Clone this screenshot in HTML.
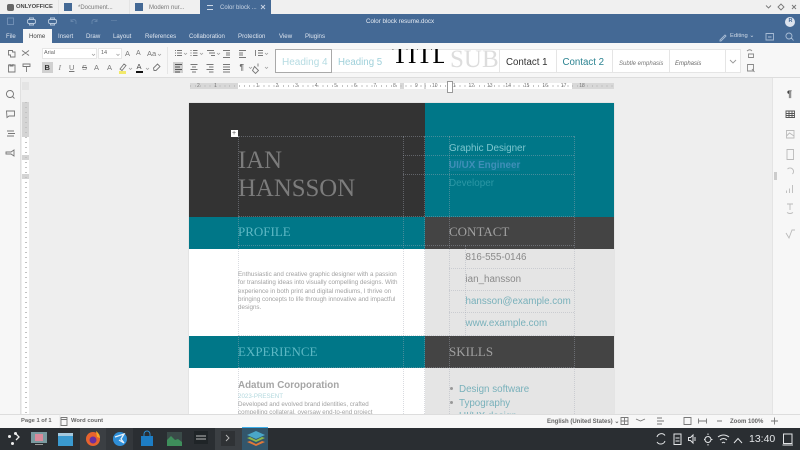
<!DOCTYPE html>
<html><head><meta charset="utf-8">
<style>
html,body{margin:0;padding:0;width:800px;height:450px;overflow:hidden;background:#eee;font-family:"Liberation Sans",sans-serif}
.a,.t{position:absolute}
.t{white-space:nowrap;line-height:1}
.s{font-family:"Liberation Serif",serif}
svg{position:absolute;overflow:visible}
svg *{fill:none;stroke:#777;stroke-width:.9}
.ic{left:0;top:0}
.dl{position:absolute;border-left:1px dotted rgba(165,170,180,.42);width:0}
.dh{position:absolute;border-top:1px dotted rgba(165,170,180,.42);height:0}
</style></head><body>
<!-- tab bar -->
<div class="a" style="left:0;top:0;width:800px;height:14px;background:#f0f0f0"></div>
<div class="a" style="left:58px;top:0;width:1px;height:14px;background:#e4e4e4"></div>
<div class="a" style="left:129px;top:0;width:1px;height:14px;background:#e4e4e4"></div>
<div class="a" style="left:200px;top:0;width:71px;height:14px;background:#446995"></div>
<div class="a" style="left:7px;top:4px;width:7px;height:7px;background:#666;border-radius:2px"></div>
<div class="t" style="left:16px;top:4.500px;font-size:5.800px;font-weight:bold;color:#444">ONLYOFFICE</div>
<div class="a" style="left:64px;top:3px;width:8px;height:8px;background:#446995"></div>
<div class="t" style="left:78px;top:4.500px;font-size:6px;color:#777">*Document...</div>
<div class="a" style="left:135px;top:3px;width:8px;height:8px;background:#446995"></div>
<div class="t" style="left:149px;top:4.500px;font-size:6px;color:#777">Modern nur...</div>
<div class="a" style="left:207px;top:5px;width:6px;height:3px;border-top:1px solid #cdd8e6;border-bottom:1px solid #cdd8e6"></div>
<div class="t" style="left:220px;top:4.500px;font-size:6px;color:#c8d4e4">Color block ...</div>
<svg class="ic" width="800" height="14"><path d="M261 5l4 4M265 5l-4 4" style="stroke:#c8d4e4"/><path d="M766 5.500l2.500 2.500 2.500-2.500M778 7l3-3 3 3-3 3zM792 5l4 4M796 5l-4 4"/></svg>
<!-- header -->
<div class="a" style="left:0;top:14px;width:800px;height:29px;background:#446995"></div>
<div class="t" style="left:366px;top:19px;font-size:6.200px;color:#e4eaf2">Color block resume.docx</div>
<div class="a" style="left:785px;top:17px;width:10px;height:10px;border-radius:50%;background:#dce3ee"></div>
<div class="t" style="left:788.500px;top:19px;font-size:5.500px;font-weight:bold;color:#446995">R</div>
<svg class="ic" width="800" height="43">
<rect x="7.500" y="18" width="6" height="6.500" style="stroke:#7593b7"/>
<rect x="27.500" y="19.500" width="8" height="4" rx="1.500" style="stroke:#b8c9dd"/><path d="M29.500 19.500v-1.500h4v1.500M29.500 23.500v1.500h4v-1.500" style="stroke:#b8c9dd"/>
<rect x="48.500" y="19.500" width="8" height="4" rx="1.500" style="stroke:#b8c9dd"/><path d="M50.500 19.500v-1.500h4v1.500M50.500 23.500v1.500h4v-1.500" style="stroke:#b8c9dd"/>
<path d="M71 21q3-3 5 0v3M71 19v2.500h2.500M97 21q-3-3-5 0v3M97 19v2.500h-2.500" style="stroke:#6585ab"/>
</svg>
<div class="t" style="left:111px;top:18px;font-size:6px;color:#b8c9dd">···</div>
<div class="t" style="left:6px;top:33.500px;font-size:6.100px;color:#dfe6f0">File</div>
<div class="a" style="left:23px;top:29px;width:29px;height:14px;background:#f7f7f7"></div>
<div class="t" style="left:29px;top:33.500px;font-size:6.100px;color:#444">Home</div>
<div class="t" style="left:58px;top:33.500px;font-size:6.100px;color:#dfe6f0">Insert</div>
<div class="t" style="left:86px;top:33.500px;font-size:6.100px;color:#dfe6f0">Draw</div>
<div class="t" style="left:113px;top:33.500px;font-size:6.100px;color:#dfe6f0">Layout</div>
<div class="t" style="left:145px;top:33.500px;font-size:6.100px;color:#dfe6f0">References</div>
<div class="t" style="left:189px;top:33.500px;font-size:6.100px;color:#dfe6f0">Collaboration</div>
<div class="t" style="left:238px;top:33.500px;font-size:6.100px;color:#dfe6f0">Protection</div>
<div class="t" style="left:279px;top:33.500px;font-size:6.100px;color:#dfe6f0">View</div>
<div class="t" style="left:305px;top:33.500px;font-size:6.100px;color:#dfe6f0">Plugins</div>
<div class="t" style="left:730px;top:34px;font-size:5.800px;color:#cdd8e6">Editing ⌄</div>
<svg class="ic" width="800" height="43"><path d="M720 40l5-5 1 1-5 5h-1zM766 33.500h7.500v6.500h-7.500zM768 37h3.500M789 33a3 3 0 1 1-.1 0M791.500 38l2 2.500" style="stroke:#a7bbd4"/></svg>
<!-- toolbar -->
<div class="a" style="left:0;top:43px;width:800px;height:35px;background:#f7f7f7;border-bottom:1px solid #ddd;box-sizing:border-box"></div>
<div class="a" style="left:42px;top:48px;width:55px;height:11px;background:#fff;border:1px solid #e6e6e6;box-sizing:border-box"></div>
<div class="t" style="left:44px;top:51px;font-size:5.500px;color:#666">Arial</div>
<div class="a" style="left:98px;top:48px;width:24px;height:11px;background:#fff;border:1px solid #e6e6e6;box-sizing:border-box"></div>
<div class="t" style="left:101px;top:51px;font-size:5.500px;color:#666">14</div>
<div class="a" style="left:42px;top:62px;width:11px;height:11px;background:#d0d0d0"></div>
<div class="a" style="left:173px;top:62px;width:10px;height:11px;background:#d0d0d0"></div>
<div class="t" style="left:44.500px;top:64px;font-size:7.500px;font-weight:bold;color:#333">B</div>
<div class="t s" style="left:58.500px;top:64px;font-size:7.500px;font-style:italic;color:#777">I</div>
<div class="t" style="left:69px;top:64px;font-size:7.500px;text-decoration:underline;color:#777">U</div>
<div class="t" style="left:82px;top:64px;font-size:7.500px;text-decoration:line-through;color:#777">S</div>
<div class="t" style="left:94px;top:64px;font-size:7.500px;color:#777">A</div>
<div class="t" style="left:107px;top:64px;font-size:7.500px;color:#777">A</div>
<div class="t" style="left:125px;top:49.500px;font-size:7.500px;color:#777">A</div>
<div class="t" style="left:136px;top:50px;font-size:7px;color:#777">A</div>
<div class="t" style="left:147px;top:50px;font-size:7.500px;color:#777">Aa</div>
<div class="t" style="left:136.500px;top:63px;font-size:7.500px;color:#444">A</div>
<div class="a" style="left:136px;top:71px;width:7px;height:2px;background:#111"></div>
<div class="a" style="left:119px;top:71px;width:7px;height:2.500px;background:#f2e96a"></div>
<svg class="ic" width="800" height="78">
<path d="M8.500 50.500h4v1.500h2.500v5h-4.500v-2h-2zM22 50.500l7 5M22 55.500l7-5M8.500 65h6.500v7h-6.500zM10 64v2h3v-2M23 64h7v2.500h-7zM26.500 66.500v5.500M120 69l4-5 2 1.500-4 5zM153.500 68l4-4 2.500 2.500-4 4h-2z"/>
<path d="M92 54l1.500 1.500 1.500-1.500M116.500 54l1.500 1.500 1.500-1.500M158 54l1.500 1.500 1.500-1.500M129 68l1.500 1.500 1.500-1.500M146 68l1.500 1.500 1.500-1.500M184 53l1.500 1.500 1.500-1.500M200 53l1.500 1.500 1.500-1.500M217 53l1.500 1.500 1.500-1.500M265 53l1.500 1.500 1.500-1.500M249 67l1.500 1.500 1.500-1.500M265 67l1.500 1.500 1.500-1.500" style="stroke:#999;stroke-width:.7"/>
<path d="M175 50.500h1M177 50.500h5M175 53h1M177 53h5M175 55.500h1M177 55.500h5M190.500 50.500h1M193 50.500h4.500M190.500 53h1M193 53h4.500M190.500 55.500h1M193 55.500h4.500M207 50.500h7M209 53h6M211 55.500h4M223 50.500h7M226 53h4M226 55h4M223 57.500h7M239 50.500h7M239 53h4M239 55h4M239 57.500h7M258 50.500h5M258 53h5M258 55.500h5M255.500 50v6"/>
<path d="M175 64.500h7M175 67h5M175 69.500h7M175 72h5" style="stroke:#555"/>
<path d="M190.500 64.500h7M192 67h4M190.500 69.500h7M192 72h4M206.500 64.500h7M209 67h4.500M206.500 69.500h7M209 72h4.500M223 64.500h7M223 67h7M223 69.500h7M223 72h7"/>
<path d="M254.500 66.500l4 4-3 3-3-3zM258 63.500v3"/>
<path d="M167.500 47v27" style="stroke:#e4e4e4"/>
<path d="M747 51q3-2.500 5 0M748.500 54h5v3.500h-5zM747.500 64.500h6v6.500h-6zM752 69l2.500 3" style="stroke:#888"/>
</svg>
<div class="t" style="left:239.500px;top:63.500px;font-size:8px;font-weight:bold;color:#666">¶</div>
<!-- style gallery -->
<div class="a" style="left:275px;top:49px;width:466px;height:24px;background:#fff;border:1px solid #e5e5e5;box-sizing:border-box"></div>
<div class="a" style="left:275px;top:49px;width:57px;height:24px;border:1px solid #a9a9a9;box-sizing:border-box"></div>
<div class="t" style="left:282px;top:57.500px;font-size:10px;color:#b5dbe2">Heading 4</div>
<div class="t" style="left:338px;top:57.500px;font-size:9.700px;color:#9fd0da">Heading 5</div>
<div class="a" style="left:388px;top:49px;width:56px;height:24px;overflow:hidden"><div class="t s" style="left:4px;top:-7px;font-size:26px;color:#000">TITLE</div></div>
<div class="a" style="left:444px;top:49px;width:56px;height:24px;overflow:hidden;border-right:1px solid #e5e5e5;box-sizing:border-box"><div class="t s" style="left:6px;top:-2px;font-size:25px;color:#ddd">SUB</div></div>
<div class="t" style="left:506px;top:57.500px;font-size:9.700px;color:#333">Contact 1</div>
<div class="a" style="left:556px;top:49px;width:1px;height:24px;background:#e5e5e5"></div>
<div class="t" style="left:562.500px;top:57.500px;font-size:9.700px;color:#2b8391">Contact 2</div>
<div class="a" style="left:612px;top:49px;width:1px;height:24px;background:#e5e5e5"></div>
<div class="t" style="left:619px;top:60.500px;font-size:6px;font-style:italic;color:#777">Subtle emphasis</div>
<div class="a" style="left:669px;top:49px;width:1px;height:24px;background:#e5e5e5"></div>
<div class="t" style="left:675px;top:60.500px;font-size:6px;font-style:italic;color:#666">Emphasis</div>
<div class="a" style="left:725px;top:49px;width:1px;height:24px;background:#e5e5e5"></div>
<svg class="ic" width="800" height="78"><path d="M730 60l3 3 3-3" style="stroke:#999"/></svg>
<!-- left panel -->
<div class="a" style="left:0;top:78px;width:20px;height:336px;background:#f7f7f7;border-right:1px solid #e0e0e0"></div>
<svg class="ic" width="20" height="170"><path d="M10 90.500a3.500 3.500 0 1 1-.1 0M12.500 96.500l2 2M6.500 111h8v5h-5.500l-2 1.500zM7 131h7M8 133.500h7M7 136h7M6 152h5l3-2v6l-3-2H6z"/></svg>
<!-- vertical ruler -->
<div class="a" style="left:22px;top:102px;width:7px;height:312px;background:#fff"></div>
<div class="a" style="left:22px;top:102px;width:7px;height:35px;background:#d4d4d4"></div>
<div class="a" style="left:22px;top:155px;width:7px;height:5px;background:#d4d4d4"></div>
<div class="a" style="left:22px;top:174px;width:7px;height:5px;background:#d4d4d4"></div>
<div class="a" style="left:25px;top:102px;width:2px;height:312px;background:repeating-linear-gradient(180deg,#c2c2c2 0,#c2c2c2 1px,transparent 1px,transparent 5px)"></div>
<div class="a" style="left:22px;top:82px;width:7px;height:8px;background:#e4e4e4"></div>
<!-- horizontal ruler -->
<div class="a" style="left:190px;top:83px;width:424px;height:6px;background:#fff"></div>
<div class="a" style="left:190px;top:83px;width:48px;height:6px;background:#d8d8d8"></div>
<div class="a" style="left:572px;top:83px;width:42px;height:6px;background:#d8d8d8"></div>
<div class="a" style="left:400px;top:83px;width:4px;height:6px;background:#d8d8d8"></div>
<div class="a" style="left:424px;top:83px;width:2px;height:6px;background:#d8d8d8"></div>
<div class="a" style="left:190px;top:85px;width:424px;height:2px;background:repeating-linear-gradient(90deg,#c2c2c2 0,#c2c2c2 1px,transparent 1px,transparent 4.900px)"></div>
<div class="t" style="left:197px;top:83.500px;font-size:5px;color:#777;word-spacing:13px">2 1 </div>
<div class="t" style="left:256px;top:83.500px;font-size:5px;color:#777;word-spacing:15.400px">1 2 3 4 5 6 7 8</div>
<div class="t" style="left:415px;top:83.500px;font-size:5px;color:#777">9</div>
<div class="t" style="left:432px;top:83.500px;font-size:5px;color:#777;word-spacing:11.500px">10 11 12 13 14 15 16 17 18</div>
<div class="a" style="left:447px;top:81px;width:4px;height:10px;border:1px solid #999;background:#fff"></div>
<!-- scrollbar + right -->
<div class="a" style="left:772px;top:78px;width:7px;height:336px;background:#f7f7f7;border-left:1px solid #e4e4e4;border-right:1px solid #e4e4e4"></div>
<div class="a" style="left:774px;top:172px;width:3px;height:8px;background:#ccc"></div>
<div class="a" style="left:780px;top:78px;width:20px;height:336px;background:#f7f7f7"></div>
<div class="t" style="left:787px;top:90px;font-size:9px;font-weight:bold;color:#444">¶</div>
<svg class="ic" width="800" height="245"><path d="M786 111h8.500v6.500h-8.500zM786 113.500h8.500M786 115.500h8.500M789 111v6.500M792 111v6.500" style="stroke:#555"/><path d="M786.500 130.500h7.500v7.500h-7.500zM786.500 136l3-3 4.500 3M787 149.500h6.500v10h-6.500zM787.500 169a3.500 3.500 0 1 1 5 5M786.500 193v-2.500M789.500 193v-4.500M792.500 193v-8M787 204h6M790 204v6M787 212.500q3 2 6 0M786 233l3 5 3-8h3" style="stroke:#bbb"/></svg>
<!-- page -->
<div class="a" style="left:189px;top:103px;width:425px;height:311px;background:#fff;box-shadow:0 0 1px #bbb"></div>
<div class="a" style="left:189px;top:103px;width:236px;height:114px;background:#333"></div>
<div class="a" style="left:425px;top:103px;width:189px;height:114px;background:#007788"></div>
<div class="a" style="left:189px;top:217px;width:236px;height:32px;background:#007788"></div>
<div class="a" style="left:425px;top:217px;width:189px;height:32px;background:#444"></div>
<div class="a" style="left:425px;top:249px;width:189px;height:165px;background:#e5e5e5"></div>
<div class="a" style="left:189px;top:336px;width:236px;height:32px;background:#007788"></div>
<div class="a" style="left:425px;top:336px;width:189px;height:32px;background:#444"></div>
<div class="a" style="left:449px;top:159px;width:71px;height:12px;background:#087a90"></div>
<div class="t s" style="left:238px;top:148.500px;font-size:24.800px;color:#7c7c7c">IAN</div>
<div class="t s" style="left:238px;top:177px;font-size:24.800px;color:#7c7c7c">HANSSON</div>
<div class="t s" style="left:238px;top:225px;font-size:13px;color:#5cb8c4">PROFILE</div>
<div class="t s" style="left:449px;top:225px;font-size:13px;color:#a0a0a0">CONTACT</div>
<div class="t" style="left:449px;top:143.500px;font-size:9.900px;color:#7cc6cf">Graphic Designer</div>
<div class="t" style="left:449px;top:161px;font-size:9.900px;font-weight:bold;color:#3f8fb8">UI/UX Engineer</div>
<div class="t" style="left:449px;top:179px;font-size:9.900px;color:#2b97a5">Developer</div>
<div class="t" style="left:238px;top:271px;font-size:6.250px;line-height:8.300px;color:#a2a2a2;white-space:nowrap">Enthusiastic and creative graphic designer with a passion<br>for translating ideas into visually compelling designs. With<br>experience in both print and digital mediums, I thrive on<br>bringing concepts to life through innovative and impactful<br>designs.</div>
<div class="t" style="left:465.500px;top:252.500px;font-size:9.800px;color:#8a8a8a">816-555-0146</div>
<div class="t" style="left:465.500px;top:274.500px;font-size:9.800px;color:#8a8a8a">ian_hansson</div>
<div class="t" style="left:465.500px;top:296.500px;font-size:9.800px;color:#79b1bb">hansson@example.com</div>
<div class="t" style="left:465.500px;top:318.500px;font-size:9.800px;color:#79b1bb">www.example.com</div>
<div class="t s" style="left:238px;top:345px;font-size:13px;color:#5cb8c4">EXPERIENCE</div>
<div class="t s" style="left:449px;top:345px;font-size:13px;color:#a0a0a0">SKILLS</div>
<div class="t" style="left:238px;top:380.500px;font-size:9.800px;font-weight:bold;color:#a5a5a5">Adatum Coroporation</div>
<div class="t" style="left:238px;top:393.500px;font-size:6.200px;color:#b3d8de">2023-PRESENT</div>
<div class="a" style="left:238px;top:401px;width:180px;height:13px;overflow:hidden"><div class="t" style="left:0;top:0;font-size:6.200px;line-height:8.300px;color:#a2a2a2">Developed and evolved brand identities, crafted<br>compelling collateral, oversaw end-to-end project</div></div>
<div class="a" style="left:450px;top:387px;width:3px;height:3px;background:#999;border-radius:50%"></div>
<div class="a" style="left:450px;top:401px;width:3px;height:3px;background:#999;border-radius:50%"></div>
<div class="t" style="left:459px;top:385px;font-size:9.800px;color:#79b1bb">Design software</div>
<div class="t" style="left:459px;top:399px;font-size:9.800px;color:#79b1bb">Typography</div>
<div class="a" style="left:459px;top:411px;width:60px;height:3px;overflow:hidden"><div class="t" style="left:0;top:1px;font-size:9.800px;color:#79b1bb">UI/UX design</div></div>
<!-- table gridlines -->
<div class="dl" style="left:238px;top:136px;height:278px"></div>
<div class="dl" style="left:403px;top:136px;height:278px"></div>
<div class="dl" style="left:424px;top:136px;height:278px"></div>
<div class="dl" style="left:449px;top:136px;height:278px"></div>
<div class="dl" style="left:465px;top:245px;height:90px"></div>
<div class="dl" style="left:574px;top:136px;height:278px"></div>
<div class="dh" style="left:238px;top:136px;width:336px"></div>
<div class="dh" style="left:403px;top:155px;width:171px"></div>
<div class="dh" style="left:403px;top:174px;width:171px"></div>
<div class="dh" style="left:238px;top:216px;width:336px"></div>
<div class="dh" style="left:238px;top:245px;width:336px"></div>
<div class="dh" style="left:449px;top:268px;width:125px"></div>
<div class="dh" style="left:449px;top:290px;width:125px"></div>
<div class="dh" style="left:449px;top:312px;width:125px"></div>
<div class="dh" style="left:238px;top:335px;width:336px"></div>
<div class="dh" style="left:238px;top:367px;width:336px"></div>
<div class="a" style="left:231px;top:130px;width:7px;height:7px;background:#fff"></div>
<div class="t" style="left:232px;top:130px;font-size:7px;color:#555">+</div>
<!-- status bar -->
<div class="a" style="left:0;top:414px;width:800px;height:14px;background:#f7f7f7;border-top:1px solid #ddd;box-sizing:border-box"></div>
<div class="t" style="left:21px;top:418.500px;font-size:5.800px;font-weight:bold;color:#666">Page 1 of 1</div>
<div class="t" style="left:71px;top:418.500px;font-size:5.800px;font-weight:bold;color:#666">Word count</div>
<div class="t" style="left:547px;top:418.500px;font-size:6px;font-weight:bold;color:#666">English (United States) ⌄</div>
<div class="t" style="left:730px;top:418.500px;font-size:6px;font-weight:bold;color:#666">Zoom 100%</div>
<svg class="ic" width="800" height="428"><path d="M61 417.500h6v8h-6zM61 419.500h6M621 417.500h7v7h-7zM624.500 417.500v7M621 421h7M636 419l4.500 2 4.500-2M657 418h5M657 421h7M657 424h5M684 417.500h7v7h-7zM698.500 421h8M698.500 418.500v5M706.500 418.500v5M717 421h5M771 421h7M774.500 417.500v7"/><path d="M60 414v14" style="stroke:#e4e4e4"/></svg>
<!-- taskbar -->
<div class="a" style="left:0;top:428px;width:800px;height:22px;background:#2a2e32"></div>
<div class="a" style="left:80px;top:428px;width:26px;height:22px;background:#3b3f43"></div>
<div class="a" style="left:106px;top:428px;width:27px;height:22px;background:#33373b"></div>
<div class="a" style="left:215px;top:428px;width:27px;height:22px;background:#3b3f43"></div>
<div class="a" style="left:242px;top:428px;width:26px;height:22px;background:#33566b"></div>
<div class="a" style="left:242px;top:427px;width:26px;height:1px;background:#3daee9"></div>
<div class="a" style="left:8px;top:435px;width:3px;height:3px;background:#eee;border-radius:50%"></div>
<div class="a" style="left:14px;top:432px;width:3px;height:3px;background:#eee;border-radius:50%"></div>
<div class="a" style="left:11px;top:442px;width:3px;height:3px;background:#eee;border-radius:50%"></div>
<svg class="ic" width="800" height="450">
<path d="M16 434l3 3-3 3" style="stroke:#eee;stroke-width:1.300"/>
<rect x="31" y="432" width="16" height="11" style="fill:#7a9aa0;stroke:none"/><rect x="35" y="434" width="8" height="7" style="fill:#d98a9a;stroke:none"/><rect x="35" y="444" width="8" height="1" style="fill:#999;stroke:none"/>
<rect x="58" y="435" width="15" height="11" style="fill:#3a9ad0;stroke:none"/><rect x="58" y="433" width="15" height="3" style="fill:#a5c9de;stroke:none"/>
<circle cx="93" cy="439" r="7" style="fill:#e8632e;stroke:none"/><circle cx="93" cy="440" r="3.500" style="fill:#6b2fa0;stroke:none"/><path d="M96 431q4 3 4 7l-3-1z" style="fill:#f9a825;stroke:none"/>
<circle cx="120" cy="439" r="7" style="fill:#2f8fd8;stroke:none"/><path d="M115 437l9-3-3 5 3 4-5-3" style="stroke:#e8f2fa;stroke-width:1.300"/>
<rect x="141" y="436" width="12" height="10" style="fill:#1d7dc4;stroke:none"/><path d="M144 436v-2a3 3 0 0 1 6 0v2" style="stroke:#2a91d8"/>
<rect x="167" y="432" width="15" height="14" style="fill:#3a4a48;stroke:none"/><path d="M167 446v-6l4-4 4 4 3-1 4 3v4z" style="fill:#3e8e5b;stroke:none"/>
<rect x="194" y="431" width="14" height="13" style="fill:#1f2427;stroke:none"/><path d="M196 436h10M196 439h10" style="stroke:#bbb"/>
<rect x="221" y="431" width="14" height="15" style="fill:#2f3235;stroke:none"/><path d="M226 435l3 3-3 3" style="stroke:#bbb"/>
<path d="M256 431l9 4-9 4-9-4z" style="fill:#4aa7c8;stroke:none"/><path d="M247 438l9 4 9-4-3-1-6 3-6-3z" style="fill:#8cb84c;stroke:none"/><path d="M247 442l9 4 9-4-3-1-6 3-6-3z" style="fill:#e0793a;stroke:none"/>
<path d="M657 437a4.500 4.500 0 0 1 8-1.500M665 441a4.500 4.500 0 0 1-8 1M674 434h7v10.500h-7zM675.500 438h4M675.500 441h4M688.500 437.500h2l2.500-2.500v8l-2.500-2.500h-2zM695 437v4M704 439.500h1.500M708 433.500v1.500M708 444v1.500M711 439.500h1.500M708 436.500a3 3 0 1 1-.1 0M718 437q5.500-4 11 0M720 440q3.500-3 7 0M722 443q1.500-1.500 3 0M734 443l4-4.500 4 4.500M783.500 434h8.500v9.500h-8.500zM782.500 445h10.500" style="stroke:#e2e4e6;stroke-width:1"/>
</svg>
<div class="t" style="left:749px;top:434px;font-size:10.500px;color:#e3e5e7">13:40</div>
</body></html>
